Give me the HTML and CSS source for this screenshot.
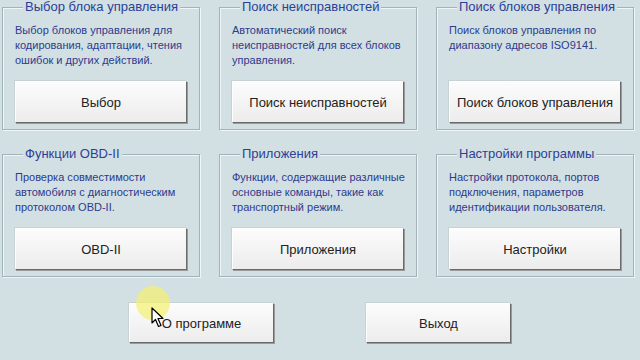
FILE: index.html
```html
<!DOCTYPE html>
<html lang="ru">
<head>
    <meta charset="UTF-8">
    <meta name="viewport" content="width=device-width, initial-scale=1.0">
    <title>Главное меню</title>
    <link rel="stylesheet" href="styles.css">
</head>
<body>
    <div id="root" class="window">
        <div class="groups">
            <fieldset class="group">
                <legend class="group-title">Выбор блока управления</legend>
                <div class="group-text">Выбор блоков управления для кодирования, адаптации, чтения ошибок и других действий.</div>
                <button class="win-button">Выбор</button>
            </fieldset>
            <fieldset class="group">
                <legend class="group-title">Поиск неисправностей</legend>
                <div class="group-text">Автоматический поиск неисправностей для всех блоков управления.</div>
                <button class="win-button">Поиск неисправностей</button>
            </fieldset>
            <fieldset class="group">
                <legend class="group-title">Поиск блоков управления</legend>
                <div class="group-text">Поиск блоков управления по диапазону адресов ISO9141.</div>
                <button class="win-button">Поиск блоков управления</button>
            </fieldset>
            <fieldset class="group">
                <legend class="group-title">Функции OBD-II</legend>
                <div class="group-text">Проверка совместимости автомобиля с диагностическим протоколом OBD-II.</div>
                <button class="win-button">OBD-II</button>
            </fieldset>
            <fieldset class="group">
                <legend class="group-title">Приложения</legend>
                <div class="group-text">Функции, содержащие различные основные команды, такие как транспортный режим.</div>
                <button class="win-button">Приложения</button>
            </fieldset>
            <fieldset class="group">
                <legend class="group-title">Настройки программы</legend>
                <div class="group-text">Настройки протокола, портов подключения, параметров идентификации пользователя.</div>
                <button class="win-button">Настройки</button>
            </fieldset>
        </div>

        <div class="footer">
            <button class="win-button footer-button">О программе</button>
            <button class="win-button footer-button">Выход</button>
        </div>

        <!-- mouse pointer with the recording highlight -->
        <div class="pointer">
            <div class="pointer-glow"></div>
            <svg class="pointer-arrow" width="14" height="21" viewBox="0 0 14 21">
                <path d="M1 1 L1 16 L4.5 12.5 L7.5 19.5 L10 18.5 L7 11.5 L12 11.5 Z" fill="#fff" stroke="#000" stroke-width="1.2" stroke-linejoin="round"/>
            </svg>
        </div>
    </div>
</body>
</html>
```

FILE: styles.css
```css
body, html {
    margin: 0;
    padding: 0;
    height: 100%;
    width: 100%;
    font-family: "Liberation Sans", Arial, sans-serif;
}

.window {
    position: relative;
    width: 640px;
    height: 360px;
    overflow: hidden;
    background-color: #d3e0e3;
}

.groups {
    display: grid;
    grid-template-columns: repeat(3, 198px);
    column-gap: 19px;
    row-gap: 17px;
    padding-left: 2px;
}

.group {
    margin: 0;
    min-width: 0;
    padding: 9px 12px 6px 12px;
    border: 1px solid #a3b4b8;
    box-shadow: inset 1px 1px 0 #eef5f6, 1px 1px 0 #eef5f6;
}

.group-title {
    margin-left: 8px;
    padding: 0 2px;
    font-size: 13px;
    line-height: 14px;
    color: #2c3f98;
    background-color: #d3e0e3;
}

.group-text {
    height: 45px;
    margin-right: -10px;
    font-size: 11px;
    line-height: 15px;
    color: #2d3a8e;
}

.win-button {
    display: block;
    width: 172px;
    height: 42px;
    margin-top: 13px;
    padding: 0;
    font-family: "Liberation Sans", Arial, sans-serif;
    font-size: 13px;
    color: #222;
    background: linear-gradient(to bottom, #fcfcfc, #ececec);
    border: 1px solid;
    border-color: #ffffff #6a6a6a #6a6a6a #ffffff;
    box-shadow: 1px 1px 0 #9a9a9a, -1px -1px 0 #c6d2d4;
    cursor: pointer;
}

.footer {
    display: flex;
    justify-content: center;
    gap: 92px;
    margin-top: 26px;
}

.footer-button {
    width: 145px;
    height: 40px;
    margin-top: 0;
}

.pointer {
    position: absolute;
    left: 136px;
    top: 286px;
    width: 34px;
    height: 40px;
}

.pointer-glow {
    position: absolute;
    left: 0;
    top: 0;
    width: 34px;
    height: 34px;
    border-radius: 50%;
    background-color: rgba(245, 240, 110, 0.7);
}

.pointer-arrow {
    position: absolute;
    left: 15px;
    top: 21px;
}
```
